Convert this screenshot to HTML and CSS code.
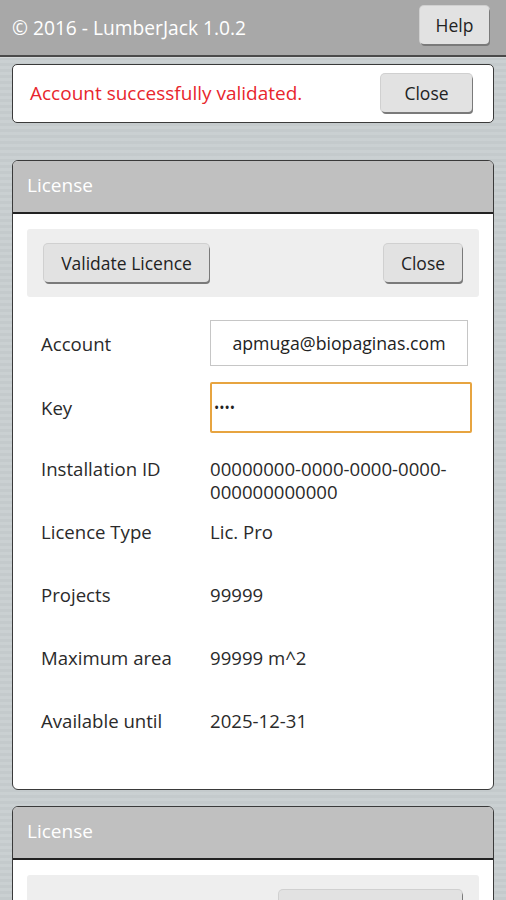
FILE: index.html
```html
<!DOCTYPE html>
<html>
<head>
<meta charset="utf-8">
<link rel="stylesheet" href="styles.css">
</head>
<body>
<header class="topbar">
  <div class="app-title">© 2016 - LumberJack 1.0.2</div>
  <button class="btn btn-help">Help</button>
</header>
<main class="content">
  <div class="message">
    <span class="message-text">Account successfully validated.</span>
    <button class="btn btn-msg-close">Close</button>
  </div>

  <section class="panel">
    <div class="panel-head">License</div>
    <div class="panel-body">
      <div class="toolbar">
        <button class="btn btn-validate">Validate Licence</button>
        <button class="btn btn-close">Close</button>
      </div>
      <div class="field field-account">
        <span class="label">Account</span>
        <div class="input input-account">apmuga@biopaginas.com</div>
      </div>
      <div class="field field-key">
        <span class="label">Key</span>
        <div class="input input-key">••••</div>
      </div>
      <div class="info">
        <div class="info-row"><span class="label">Installation ID</span><span class="value">00000000-0000-0000-0000-<br>000000000000</span></div>
        <div class="info-row"><span class="label">Licence Type</span><span class="value">Lic. Pro</span></div>
        <div class="info-row"><span class="label">Projects</span><span class="value">99999</span></div>
        <div class="info-row"><span class="label">Maximum area</span><span class="value">99999 m^2</span></div>
        <div class="info-row"><span class="label">Available until</span><span class="value">2025-12-31</span></div>
      </div>
    </div>
  </section>

  <section class="panel">
    <div class="panel-head">License</div>
    <div class="panel-body">
      <div class="toolbar toolbar-end">
        <button class="btn btn-wide" aria-label="Validate"></button>
      </div>
    </div>
  </section>
</main>
</body>
</html>
```
FILE: styles.css
```css
* { box-sizing: border-box; }
html, body {
  margin: 0;
  padding: 0;
}
body {
  width: 506px;
  font-family: "Open Sans", "Noto Sans", "Liberation Sans", sans-serif;
  background-color: #c7cdcf;
  background-image: repeating-linear-gradient(180deg, rgba(255,255,255,0.06) 0 3px, rgba(0,0,0,0.015) 3px 6px);
  color: #222;
  overflow: hidden;
}
.topbar {
  height: 57px;
  background: #a8a8a8;
  border-bottom: 2px solid #4a4a4a;
  box-shadow: 0 1px 0 #d6d9da;
  display: flex;
  align-items: flex-start;
  justify-content: space-between;
  padding: 6px 17px 0 12px;
}
.app-title {
  color: #fff;
  font-size: 19.2px;
  line-height: 24px;
  margin-top: 10px;
}
.btn {
  font-family: "Open Sans", "Noto Sans", "Liberation Sans", sans-serif;
  font-size: 17.5px;
  color: #222;
  background: #e2e2e2;
  border: none;
  border-radius: 4px;
  box-shadow: 1px 2px 0 #7a7a7a, 0 0 0 1px #d0d0d0;
  height: 38px;
  padding: 0;
  cursor: pointer;
}
.btn-help { width: 69px; height: 38px; }
.content {
  padding: 7px 12px 0 12px;
  display: flex;
  flex-direction: column;
}
.message {
  height: 59px;
  background: #fff;
  border: 1px solid #3a3a3a;
  border-radius: 5px;
  display: flex;
  align-items: center;
  justify-content: space-between;
  padding: 0 21px 2px 17px;
}
.message-text {
  color: #e8262d;
  font-size: 19px;
}
.btn-msg-close { width: 91px; }
.panel {
  margin-top: 37px;
  border: 1px solid #3a3a3a;
  border-radius: 6px;
  background: #fff;
  overflow: hidden;
}
.panel + .panel { margin-top: 16px; }
.panel-head {
  height: 53px;
  background: #c0c0c0;
  border-bottom: 2px solid #222;
  color: #fff;
  font-size: 19px;
  line-height: 24px;
  padding: 12px 0 0 14px;
}
.panel-body {
  padding: 15px 14px 17px 14px;
}
.toolbar {
  height: 68px;
  background: #eeeeee;
  border-radius: 3px;
  display: flex;
  align-items: center;
  justify-content: space-between;
  padding: 0 17px;
}
.toolbar-end { justify-content: flex-end; }
.btn-validate { width: 165px; }
.btn-close { width: 78px; }
.btn-wide { width: 183px; }
.field {
  display: flex;
  align-items: center;
  padding-left: 14px;
}
.field .label { width: 169px; }
.label, .value {
  font-size: 18.6px;
  line-height: 23px;
  color: #2a2a2a;
}
.field-account { margin-top: 23px; height: 46px; }
.field-key { margin-top: 16px; height: 51px; }
.input {
  font-size: 17.7px;
  color: #222;
  background: #fff;
  display: flex;
  align-items: center;
}
.input-account {
  width: 258px;
  height: 46px;
  border: 1px solid #c6c6c6;
  justify-content: center;
}
.input-key {
  width: 262px;
  height: 51px;
  border: 2px solid #e7a440;
  border-radius: 2px;
  padding-left: 2px;
  font-size: 14px;
}
.info {
  margin-top: 24px;
  display: grid;
  grid-auto-rows: 63px;
  padding-left: 14px;
}
.info-row {
  display: grid;
  grid-template-columns: 169px 1fr;
  align-items: start;
}
```
